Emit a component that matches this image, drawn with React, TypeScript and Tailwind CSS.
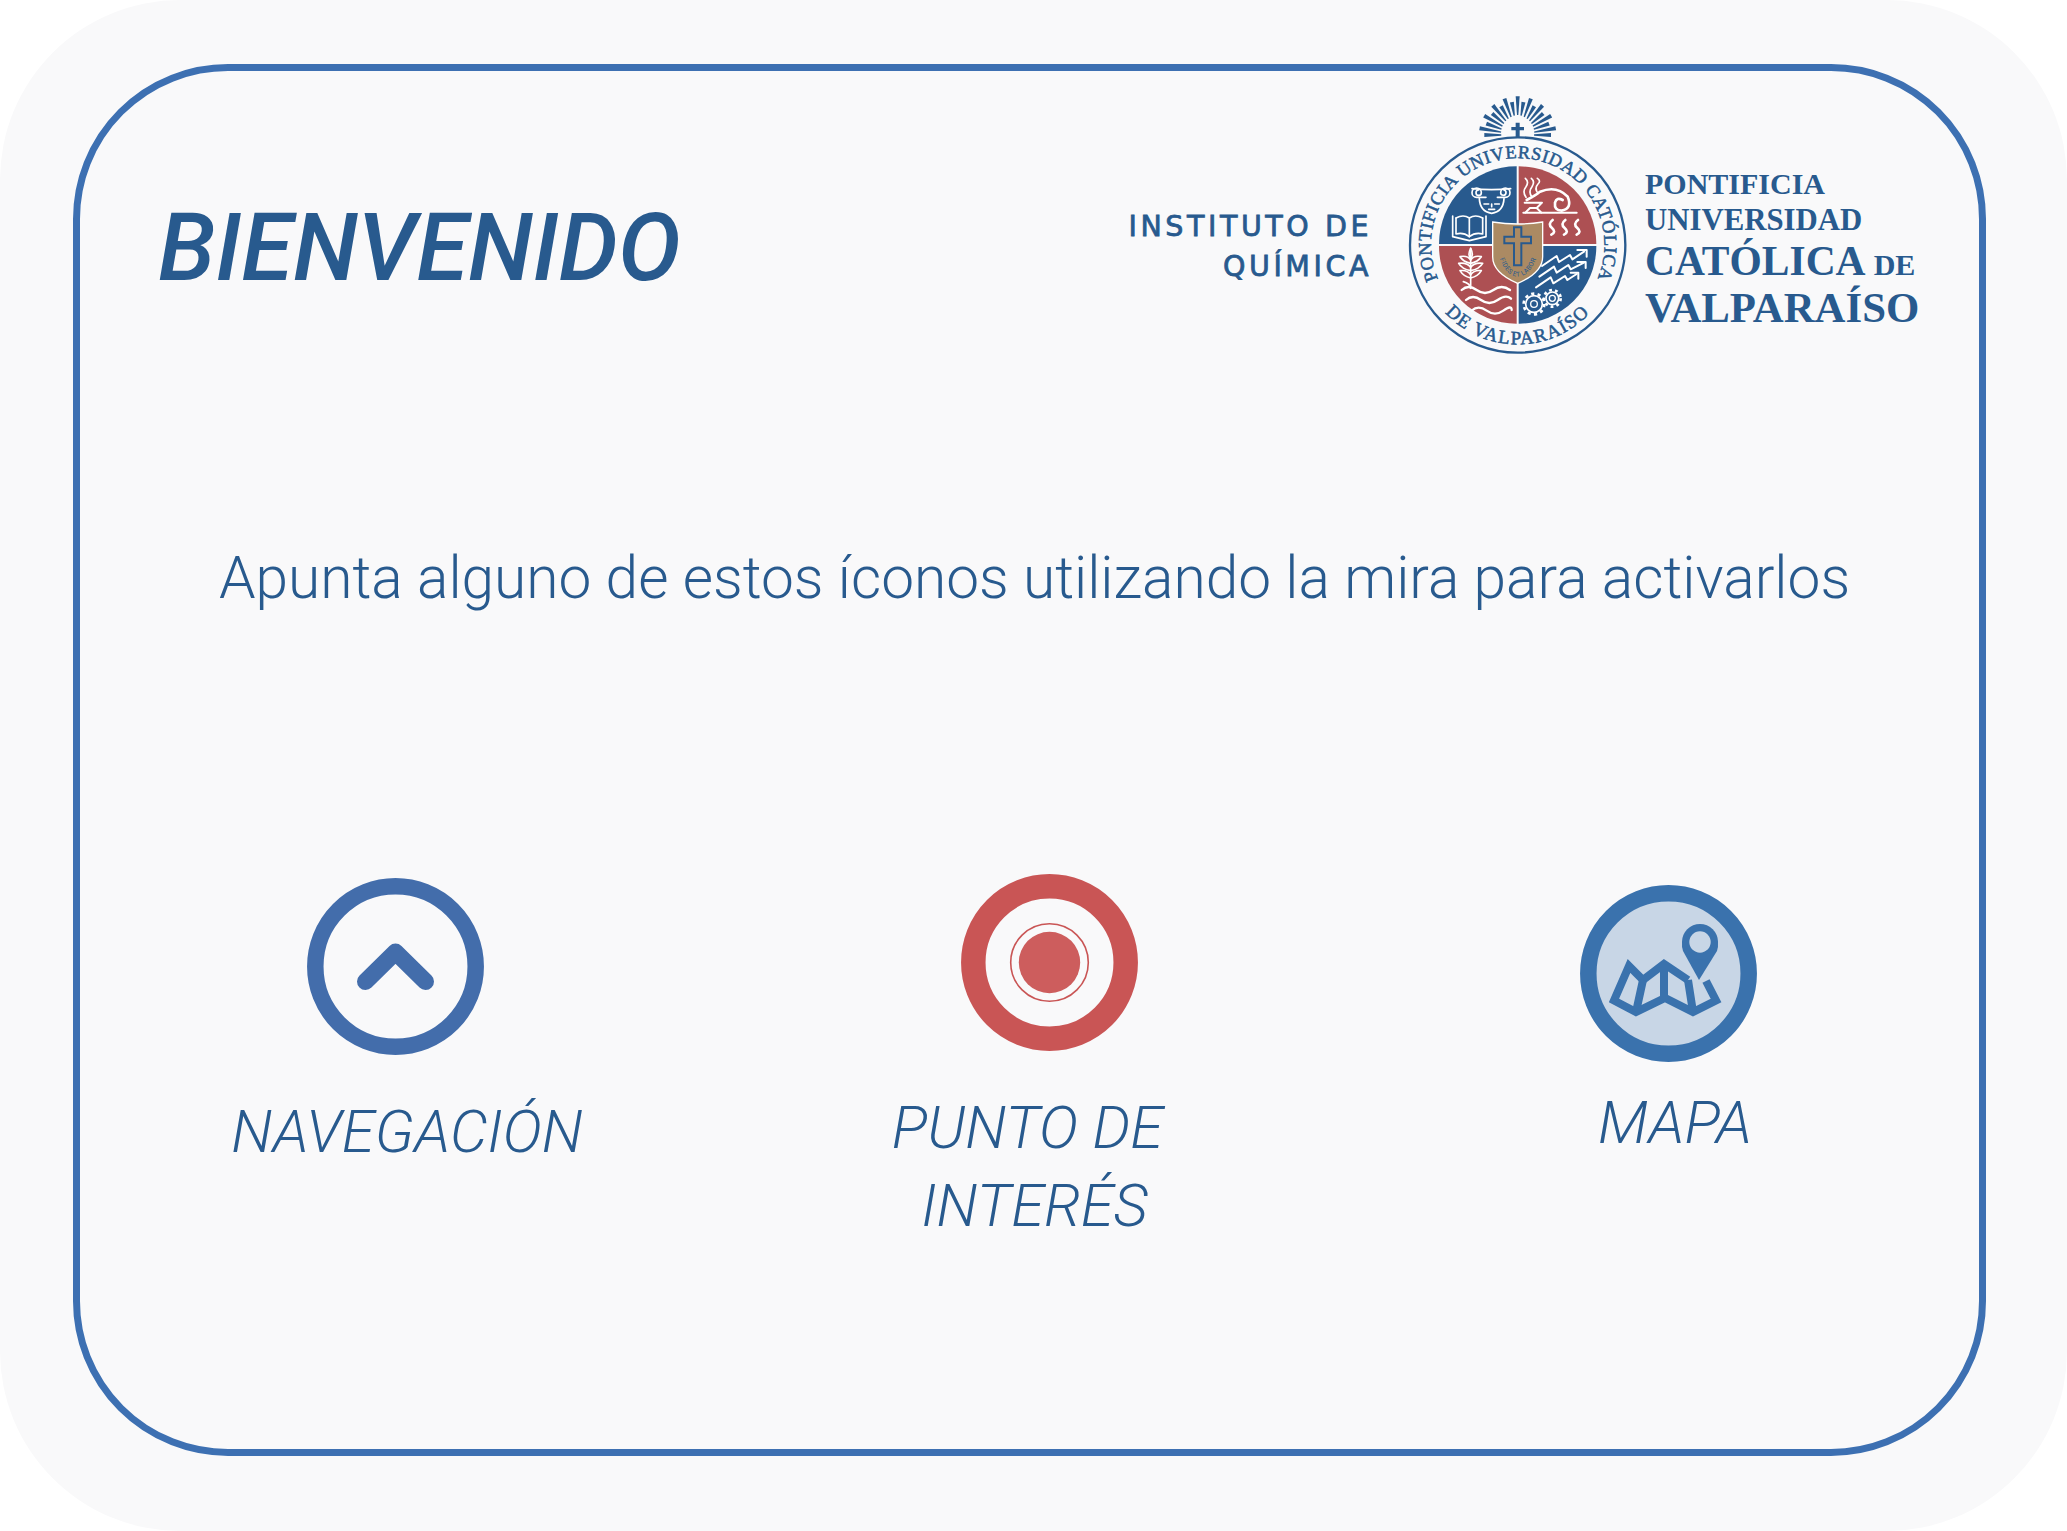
const BLUE = "#285a8e";
const RED = "#ad5053";

function Seal() {
  const rays = [];
  for (let i = -9; i <= 9; i++) {
    const a = (i * 10 * Math.PI) / 180;
    const s = Math.sin(a);
    const c = Math.cos(a);
    const r0 = 60 - Math.abs(i) * 1.2;
    const r1 = i % 2 === 0 ? 116 : 100;
    const cx = 413;
    const cy = 165;
    const w0 = 2;
    const w1 = 6;
    const pts = [
      [cx + s * r0 + c * w0, cy - c * r0 + s * w0],
      [cx + s * r1 + c * w1, cy - c * r1 + s * w1],
      [cx + s * r1 - c * w1, cy - c * r1 - s * w1],
      [cx + s * r0 - c * w0, cy - c * r0 - s * w0],
    ]
      .map((p) => p.join(","))
      .join(" ");
    rays.push(<polygon key={i} points={pts} fill={BLUE} />);
  }
  return (
    <svg viewBox="0 0 810 870" className="w-[270px] h-[290px] shrink-0 ml-[8px]">
      <defs>
        <path id="sealTop" d="M233 682 A260 260 0 1 1 593 682" />
        <path id="sealBottom" d="M115 495 A298 298 0 0 0 711 495" />
        <path id="shieldText" d="M352 512 Q372 588 413 590 Q456 588 476 512" />
      </defs>
      {rays}
      <path d="M407 128 H419 V141 H432 V151 H419 V172 H407 V151 H394 V141 H407 Z" fill={BLUE} />
      <circle cx="413" cy="495" r="323" fill="none" stroke={BLUE} strokeWidth={7} />
      <text fill={BLUE} fontFamily="Liberation Serif" fontSize="55" letterSpacing="1.6" textAnchor="middle" stroke={BLUE} strokeWidth="1.6">
        <textPath href="#sealTop" startOffset="50%">PONTIFICIA UNIVERSIDAD CATÓLICA</textPath>
      </text>
      <text fill={BLUE} fontFamily="Liberation Serif" fontSize="57" letterSpacing="4" textAnchor="middle" stroke={BLUE} strokeWidth="1.6">
        <textPath href="#sealBottom" startOffset="50%">DE VALPARAÍSO</textPath>
      </text>
      <path d="M410 492 H177 A233 233 0 0 1 410 259 Z" fill={BLUE} />
      <path d="M416 492 V259 A233 233 0 0 1 649 492 Z" fill={RED} />
      <path d="M410 498 H177 A233 233 0 0 0 410 731 Z" fill={RED} />
      <path d="M416 498 H649 A233 233 0 0 1 416 731 Z" fill={BLUE} />

      <g fill="none" stroke="#fff" strokeWidth="5" strokeLinecap="round" strokeLinejoin="round">
        {/* capital */}
        <path d="M276 326 Q335 332 392 326" />
        <path d="M318 352 H290 A14 14 0 1 1 304 338 A8 8 0 1 1 296 330" />
        <path d="M352 352 H376 A14 14 0 1 0 362 338 A8 8 0 1 0 372 330" />
        <path d="M298 356 Q300 395 335 400 Q370 395 372 356" />
        <path d="M312 372 h14 M344 372 h14 M326 388 h18 M335 372 v8" />
        {/* book */}
        <path d="M218 408 V470 L268 482 L318 470 V408" />
        <path d="M228 414 V462 Q250 456 268 470 Q286 456 308 462 V414" />
        <path d="M228 414 Q250 402 268 414 Q286 402 308 414 M268 414 V470" />
        {/* flames and wave */}
        <path d="M438 352 Q426 335 438 320 Q448 305 436 295" />
        <path d="M456 352 Q444 335 456 320 Q466 305 454 295" />
        <path d="M474 340 Q462 325 474 312 Q484 303 472 295" />
        <path d="M440 360 Q470 345 480 335 Q530 315 563 350 Q578 385 545 392 Q522 392 525 368 Q530 350 548 360" strokeWidth="8" />
        <path d="M434 368 H486 L470 384 L484 398 M470 384 H450 L436 398" strokeWidth="6" />
        <path d="M430 398 H590" strokeWidth="6" />
        <path d="M518 420 Q502 432 516 444 Q530 456 514 464" strokeWidth="8" />
        <path d="M556 420 Q540 432 554 444 Q568 456 552 464" strokeWidth="8" />
        <path d="M594 420 Q578 432 592 444 Q606 456 590 464" strokeWidth="8" />
        {/* wheat */}
        <path d="M272 505 V625 Q270 610 250 605" />
        <path d="M272 505 Q262 525 272 535 Q282 525 272 505 Z" />
        <path d="M272 540 Q262 525 240 530 Q250 545 272 550 M272 540 Q282 525 304 530 Q294 545 272 550" />
        <path d="M272 562 Q262 547 236 550 Q246 567 272 572 M272 562 Q282 547 308 550 Q298 567 272 572" />
        <path d="M272 584 Q262 569 240 572 Q250 589 272 594 M272 584 Q282 569 304 572 Q294 589 272 594" />
        {/* waves */}
        <path d="M245 630 Q265 612 290 630 T340 630 T390 630" strokeWidth="7" />
        <path d="M258 660 Q278 642 303 660 T353 660 T393 656" strokeWidth="7" />
        <path d="M275 692 Q295 674 320 692 T370 692 T395 690" strokeWidth="7" />
        {/* lightning arrows */}
        <path d="M486 558 L530 528 L537 546 L570 525 L577 538 L612 515" strokeWidth="6" />
        <path d="M592 510 H620 V530" strokeWidth="6" />
        <path d="M478 590 L522 560 L530 578 L565 555 L572 568 L612 548" strokeWidth="6" />
        <path d="M592 546 H617 V564" strokeWidth="6" />
        <path d="M468 622 L512 592 L520 610 L555 588 L562 600 L590 582" strokeWidth="6" />
        <path d="M572 578 H595 V596" strokeWidth="6" />
        {/* gears */}
        <circle cx="462" cy="672" r="10" strokeWidth="4" />
        <circle cx="462" cy="672" r="25" strokeWidth="5" />
        <circle cx="462" cy="672" r="31" strokeWidth="8" strokeDasharray="9.5 10" strokeLinecap="butt" />
        <circle cx="517" cy="655" r="9" strokeWidth="4" />
        <circle cx="517" cy="655" r="19" strokeWidth="5" />
        <circle cx="517" cy="655" r="25" strokeWidth="8" strokeDasharray="8.5 9.4" strokeLinecap="butt" />
      </g>

      <path d="M338 426 Q413 438 488 426 V530 Q488 578 413 610 Q338 578 338 530 Z" fill="#ab8a63" stroke="#fff" strokeWidth="4" />
      <path d="M402 442 H424 V470 H453 V490 H424 V556 H402 V490 H373 V470 H402 Z" fill="none" stroke={BLUE} strokeWidth="6" />
      <text fill={BLUE} fontFamily="Roboto" fontSize="20" letterSpacing="1" textAnchor="middle">
        <textPath href="#shieldText" startOffset="50%">FIDES ET LABOR</textPath>
      </text>
    </svg>
  );
}

function NavIcon() {
  return (
    <svg viewBox="0 0 177 177" className="w-[177px] h-[177px] mr-[23px]">
      <circle cx="88.5" cy="88.5" r="80.2" fill="none" stroke="#436dab" strokeWidth="16.5" />
      <path d="M58.5 103.5 L88.5 74 L118.5 103.5" fill="none" stroke="#436dab" strokeWidth="17" strokeLinecap="round" strokeLinejoin="round" />
    </svg>
  );
}

function PoiIcon() {
  return (
    <svg viewBox="0 0 177 177" className="w-[177px] h-[177px] ml-[42px]">
      <circle cx="88.5" cy="88.5" r="76.2" fill="none" stroke="#c95555" strokeWidth="24.5" />
      <circle cx="88.5" cy="88.5" r="38.8" fill="none" stroke="#c95555" strokeWidth="1.6" />
      <circle cx="88.5" cy="88.5" r="30.7" fill="#cd5d5d" />
    </svg>
  );
}

function MapIcon() {
  return (
    <svg viewBox="0 0 177 177" className="w-[177px] h-[177px] mr-[12px]">
      <circle cx="88.5" cy="88.5" r="80.2" fill="#c8d6e6" stroke="#3a72ad" strokeWidth="16.5" />
      <g fill="none" stroke="#3a72ad" strokeWidth="8" strokeLinejoin="miter">
        <path d="M108 95 L84 79 L63 95 L49 81 L34 115.5 L56 127 L85 113 L113 127 L136 115.5 L126 96" />
        <path d="M63 95 L56 127 M84 79 V113 M108 95 L113 127" />
      </g>
      <path d="M119 95 L103 66 A18 18 0 1 1 137 66 Z" fill="#3a72ad" />
      <circle cx="120" cy="57" r="18" fill="#3a72ad" />
      <circle cx="120" cy="57" r="10.7" fill="#c8d6e6" />
    </svg>
  );
}

export default function App() {
  return (
    <div className="w-[2067px] h-[1531px] bg-white overflow-hidden">
      <div className="w-full h-full rounded-[180px] bg-[#f9f9fa] pt-[64px] pl-[73px]">
        <div className="w-[1913px] h-[1392px] border-[7px] border-[#3d70b2] rounded-[155px] flex flex-col">
          <div className="flex items-start mt-[9px] h-[290px] text-[#285a8e]">
            <h1 className="ml-[78px] mt-[113px] w-[944px] font-['Roboto'] font-medium italic text-[94px] leading-[110px] whitespace-nowrap">
              BIENVENIDO
            </h1>
            <div className="w-[270px] mt-[127px] text-right font-['DejaVu_Sans'] font-normal text-[28.5px] leading-[40px] tracking-[0.125em] whitespace-nowrap [-webkit-text-stroke:0.8px_#285a8e]">
              <div>INSTITUTO DE</div>
              <div>QUÍMICA</div>
            </div>
            <Seal />
            <div className="-ml-[5px] mt-[85px] font-['Liberation_Serif'] font-bold whitespace-nowrap">
              <div className="text-[30px] leading-[37px]">PONTIFICIA</div>
              <div className="text-[30.8px] leading-[37px]">UNIVERSIDAD</div>
              <div className="text-[41.5px] leading-[44px]">
                CATÓLICA <span className="text-[30px]">DE</span>
              </div>
              <div className="text-[42.8px] leading-[42px]">VALPARAÍSO</div>
            </div>
          </div>
          <p className="mt-[173px] text-center font-['Roboto'] font-light text-[58.6px] leading-[70px] text-[#285a8e] whitespace-nowrap pl-[10px]">
            Apunta alguno de estos íconos utilizando la mira para activarlos
          </p>
          <div className="mt-[265px] flex items-start pl-[127px] font-['Roboto'] font-light italic text-[59.5px] leading-[76px] text-[#285a8e]">
            <div className="w-[400px] flex flex-col items-center">
              <NavIcon />
              <div className="mt-[39px] whitespace-nowrap">NAVEGACIÓN</div>
            </div>
            <div className="w-[400px] ml-[221px] flex flex-col items-center -mt-[4px]">
              <PoiIcon />
              <div className="mt-[38px] text-center leading-[78px]">
                <div className="-ml-[1px]">PUNTO DE</div>
                <div className="ml-[13px]">INTERÉS</div>
              </div>
            </div>
            <div className="w-[400px] ml-[246px] flex flex-col items-center mt-[7px]">
              <MapIcon />
              <div className="mt-[23px] ml-[2px] whitespace-nowrap">MAPA</div>
            </div>
          </div>
        </div>
      </div>
    </div>
  );
}
